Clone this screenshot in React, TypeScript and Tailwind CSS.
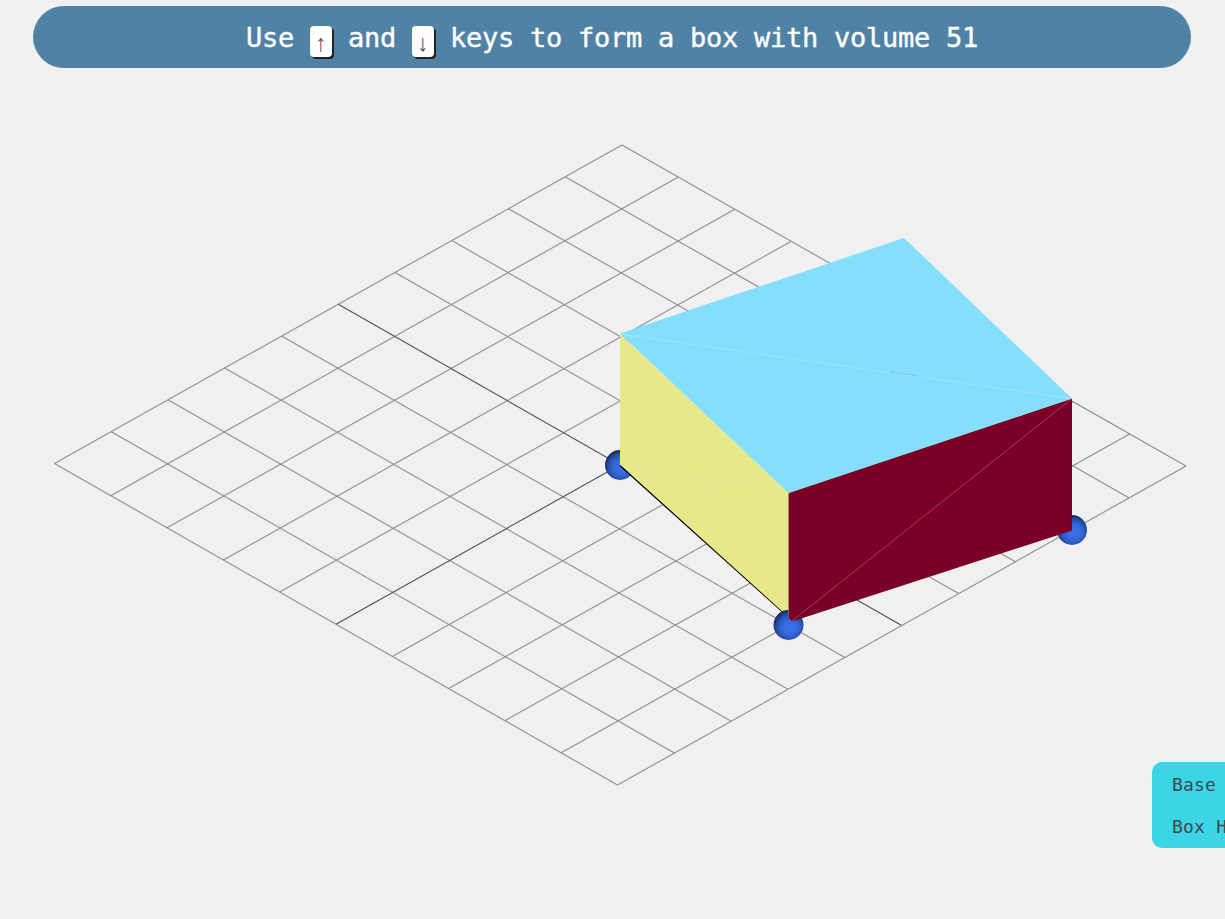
const L = [54.5, 463.5];
const T = [622, 145];
const R = [1186, 466];
const B = [617.5, 785];

function lerp(a: number[], b: number[], t: number) {
  return [a[0] + (b[0] - a[0]) * t, a[1] + (b[1] - a[1]) * t];
}

const steps = Array.from({ length: 11 }, (_, i) => i);

function Ball({ cx, cy, id }: { cx: number; cy: number; id: string }) {
  return (
    <g>
      <defs>
        <radialGradient id={id} cx="0.55" cy="0.58" r="0.58">
          <stop offset="0" stopColor="#3a72ee" />
          <stop offset="0.45" stopColor="#3568dc" />
          <stop offset="0.72" stopColor="#2a52ac" />
          <stop offset="0.92" stopColor="#1c3478" />
          <stop offset="1" stopColor="#14244f" />
        </radialGradient>
      </defs>
      <circle cx={cx} cy={cy} r={15} fill={`url(#${id})`} />
    </g>
  );
}

function Scene() {
  return (
    <svg className="block" width={1225} height={851} viewBox="0 68 1225 851" fill="none">
      {steps.map((i) => {
        const a = lerp(L, T, i / 10);
        const b = lerp(B, R, i / 10);
        const c = lerp(L, B, i / 10);
        const d = lerp(T, R, i / 10);
        const stroke = i === 5 ? "#505050" : "#8e8e8e";
        return (
          <g key={i} stroke={stroke} strokeWidth={1.1}>
            <line x1={a[0]} y1={a[1]} x2={b[0]} y2={b[1]} />
            <line x1={c[0]} y1={c[1]} x2={d[0]} y2={d[1]} />
          </g>
        );
      })}
      <Ball cx={620} cy={465} id="ball-a" />
      <Ball cx={1072} cy={530} id="ball-c" />
      <line x1={620} y1={465.5} x2={788.5} y2={617} stroke="#000000" strokeWidth={1.6} />
      <polygon points="620,334 788.5,493 788.5,617 620,464.5" fill="#e7e88a" />
      <Ball cx={788.5} cy={625} id="ball-b" />
      <polygon points="788.5,493 1072,398.5 1072,530.5 792,621.5 788.5,617" fill="#7a0028" />
      <polygon points="620,333.5 904,238 1072,398.5 788.5,493" fill="#84dffc" />
      <line x1={620} y1={465} x2={788.5} y2={493} stroke="#e2e6a8" strokeWidth={0.6} strokeDasharray="14 3" />
      <line x1={620} y1={334} x2={1072} y2={398.5} stroke="#bcedfd" strokeWidth={0.5} strokeDasharray="40 3" />
      <line x1={890} y1={372} x2={916} y2={375.7} stroke="#5a9ab0" strokeWidth={0.4} />
      <line x1={792} y1={621} x2={1072} y2={398.5} stroke="#a8627c" strokeWidth={0.7} />
      <line x1={788.5} y1={493} x2={788.5} y2={617} stroke="#a89080" strokeWidth={0.5} />
    </svg>
  );
}

function Key({ children }: { children: string }) {
  return (
    <span className="inline-block w-[22px] h-[31px] bg-white rounded-[4px] shadow-[2px_2px_0_#222222] text-[#555555] font-['Liberation_Sans',sans-serif] text-[24px] leading-[34px] text-center align-[-4px] tracking-normal font-normal [-webkit-text-stroke:0px]">
      {children}
    </span>
  );
}

export default function App() {
  return (
    <div className="relative w-full h-screen overflow-hidden bg-[#f0f0f0] font-['DejaVu_Sans_Mono',monospace]">
      <div className="ml-[33px] mr-[34px] mt-[6px] h-[62px] rounded-[31px] bg-[#5082a5] flex items-center justify-center text-white text-[27px] tracking-[-0.25px] whitespace-pre [-webkit-text-stroke:0.4px_white]">
        <span className="relative top-[1px]">
          Use <Key>↑</Key> and <Key>↓</Key> keys to form a box with volume 51
        </span>
      </div>
      <Scene />
      <div className="absolute left-[1152px] top-[762px] w-[260px] h-[86px] rounded-[10px] bg-[#3bd6e6] pl-5 pt-[2px] text-[#3b4a50] text-[18px] tracking-[0.2px] leading-[42px] whitespace-pre">
        <div>Base Area: 17</div>
        <div>Box Height: 3</div>
      </div>
    </div>
  );
}
